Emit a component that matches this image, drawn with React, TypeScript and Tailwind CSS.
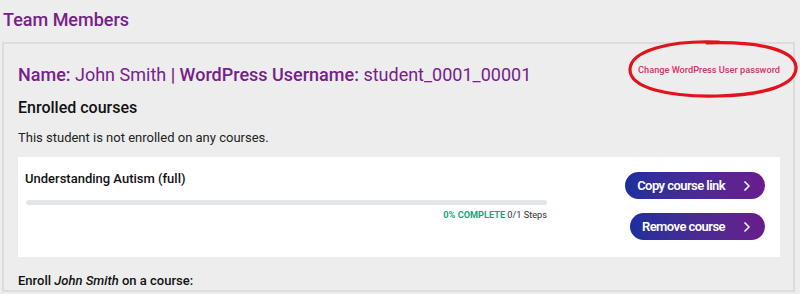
import { ChevronRight } from "lucide-react";

const font = { fontFamily: "Roboto, 'Noto Sans', sans-serif" };

function GradientButton({ label }: { label: string }) {
  return (
    <button className="flex h-[27px] items-center rounded-full bg-gradient-to-r from-[#1b2f9f] to-[#6a1b8c] pl-[12px] pr-[10px] text-[13px] font-semibold tracking-[-0.55px] text-white">
      <span>{label}</span>
      <ChevronRight className="ml-[14px] h-[16px] w-[16px]" strokeWidth={2.5} />
    </button>
  );
}

export default function App() {
  return (
    <div
      className="h-[294px] w-[800px] overflow-hidden bg-[#ededed] text-[#1c1c1c]"
      style={font}
    >
      <h2 className="pl-[3px] pt-[8px] text-[18px] font-medium leading-[24px] text-[#76218a]">
        Team Members
      </h2>

      <div className="ml-[2px] mr-[5px] mt-[10px] border-2 border-[#dcdcdc] pl-[14px] pr-[13px] pt-[18px]">
        {/* Header row */}
        <div className="relative flex items-start justify-between">
          <h3 className="text-[18px] leading-[26px] text-[#76218a]">
            <span className="font-medium">Name:</span> John Smith{" "}
            <span className="font-medium">| WordPress Username:</span>{" "}
            student_0001_00001
          </h3>
          <a className="mt-[1px] text-[9.2px] font-medium text-[#cc356c]">
            Change WordPress User password
          </a>
          <svg
            className="absolute right-[-19px] top-[-24px]"
            width="172"
            height="62"
            viewBox="0 0 172 62"
            fill="none"
          >
            <path
              d="M92 4 C 42 2, 4 13, 3 31 C 2 50, 42 59, 90 58 C 138 57, 170 47, 169 29 C 168 12, 132 3, 80 5"
              stroke="#e3121b"
              strokeWidth="3.2"
              strokeLinecap="round"
            />
          </svg>
        </div>

        <h4 className="mt-[10px] text-[16px] font-medium leading-[20px] text-[#111]">
          Enrolled courses
        </h4>
        <p className="mt-[11px] text-[13px] leading-[18px] text-[#222]">
          This student is not enrolled on any courses.
        </p>

        {/* Course card */}
        <div className="mt-[10px] flex h-[100px] items-start justify-between bg-white pl-[7px] pr-[15px]">
          <div className="w-[522px] pt-[13px]">
            <div className="text-[13px] font-medium leading-[18px] text-[#111]">
              Understanding Autism (full)
            </div>
            <div className="ml-[1px] mt-[12px] h-[5px] rounded-full bg-[#e3e7eb]" />
            <div className="mt-[4px] text-right text-[9.2px] leading-[12px]">
              <span className="font-bold text-[#1aa37a]">0% COMPLETE</span>{" "}
              <span className="text-[#333]">0/1 Steps</span>
            </div>
          </div>
          <div className="flex flex-col items-end gap-[14px] pt-[15px]">
            <GradientButton label="Copy course link" />
            <GradientButton label="Remove course" />
          </div>
        </div>

        <p className="mt-[15px] text-[13px] font-medium leading-[18px] text-[#111]">
          Enroll <em>John Smith</em> on a course:
        </p>
      </div>
    </div>
  );
}
